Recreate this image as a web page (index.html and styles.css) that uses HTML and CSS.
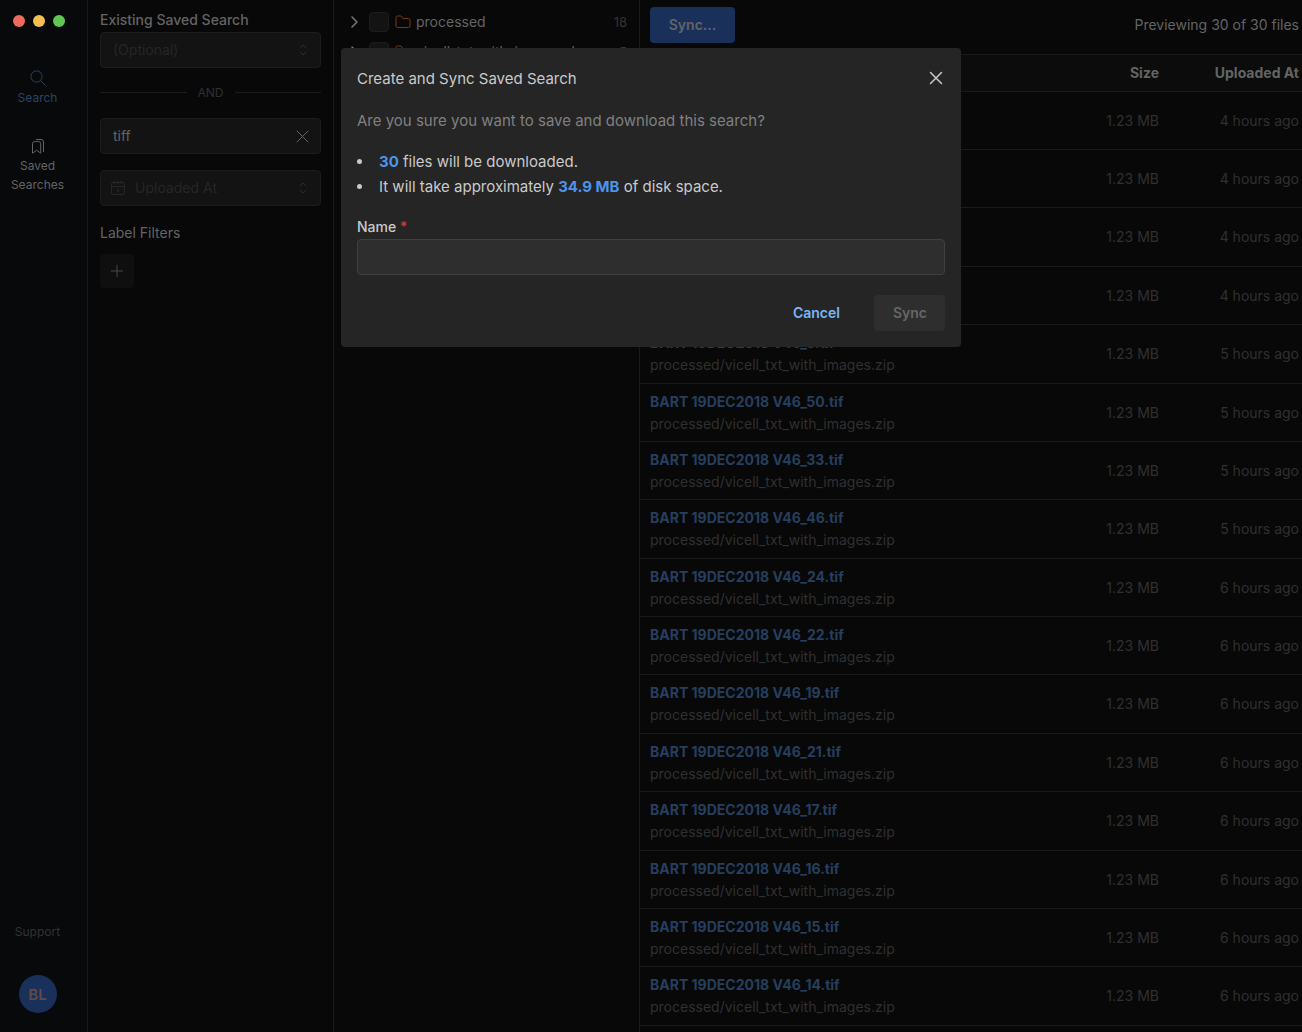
FILE: index.html
```html
<!DOCTYPE html>
<html lang="en">
<head>
<meta charset="utf-8">
<title>Search</title>
<link rel="stylesheet" href="styles.css">
</head>
<body>
<div class="app">
  <nav class="rail">
    <div class="lights" aria-hidden="true"><span class="light red"></span><span class="light yellow"></span><span class="light green"></span></div>
    <a class="rail-link active" href="#search">
      <svg width="18" height="18" viewBox="0 0 18 18" fill="none" stroke="currentColor"><circle cx="8.500" cy="7.500" r="5.600"/><path d="M12.500 11.500l4.800 4.800"/></svg>
      <span>Search</span>
    </a>
    <a class="rail-link" href="#saved">
      <svg width="18" height="18" viewBox="0 0 18 18" fill="none" stroke="currentColor"><path d="M3.500 16.200V6.600a2 2 0 0 1 2-2h4.200a2 2 0 0 1 2 2v9.600l-4.100-3z" stroke-linejoin="round"/><path d="M7.500 2.500h4.500a2.500 2.500 0 0 1 2.500 2.500v9.500" stroke-linecap="round"/></svg>
      <span>Saved Searches</span>
    </a>
    <a class="support" href="#support">Support</a>
    <button class="avatar" type="button">BL</button>
  </nav>

  <section class="filters">
    <label class="field-label medium" for="existing">Existing Saved Search</label>
    <div class="control">
      <select id="existing" class="grow"><option>(Optional)</option></select>
      <svg class="updown" width="14" height="14" viewBox="0 0 14 14" fill="none" stroke="currentColor" stroke-linecap="round" stroke-linejoin="round"><path d="M5 5l3-3 3 3M5 9l3 3 3-3"/></svg>
    </div>
    <div class="divider">AND</div>
    <div class="control text-control">
      <input class="grow" type="text" value="tiff" aria-label="File search">
      <button class="icon-button" type="button" aria-label="Clear"><svg width="14" height="14" viewBox="0 0 14 14" fill="none" stroke="currentColor" stroke-linecap="round"><path d="M2 2l11 11M13 2l-11 11"/></svg></button>
    </div>
    <div class="control date-control">
      <svg class="calendar" width="16" height="16" viewBox="0 0 16 16" fill="none" stroke="currentColor" stroke-linecap="round" stroke-linejoin="round"><rect x="1.500" y="2.500" width="13" height="12" rx="1.500"/><path d="M4.500 1v3M8 1v3M11.500 1v3M1.500 6.500h13M8 9v3M7.500 10.500h1"/></svg>
      <select class="grow" aria-label="Uploaded At"><option>Uploaded At</option></select>
      <svg class="updown" width="14" height="14" viewBox="0 0 14 14" fill="none" stroke="currentColor" stroke-linecap="round" stroke-linejoin="round"><path d="M5 5l3-3 3 3M5 9l3 3 3-3"/></svg>
    </div>
    <div class="field-label filters-title">Label Filters</div>
    <button class="add" type="button" aria-label="Add label filter"><svg width="14" height="14" viewBox="0 0 14 14" fill="none" stroke="currentColor"><path d="M7 1v12M1 7h12"/></svg></button>
  </section>

  <section class="tree">
    <div class="node">
      <svg class="chevron" width="12" height="14" viewBox="0 0 12 14" fill="none" stroke="currentColor" stroke-width="1.500" stroke-linecap="round" stroke-linejoin="round"><path d="M3 2l5 5-5 5"/></svg>
      <input id="n1" type="checkbox">
      <svg class="folder" width="16" height="14" viewBox="0 0 16 14" fill="none" stroke="currentColor" stroke-linejoin="round"><path d="M1 2.500a1.500 1.500 0 0 1 1.500-1.500h3.500l2 2.500h5.500a1.500 1.500 0 0 1 1.500 1.500v6a1.500 1.500 0 0 1-1.500 1.500h-11a1.500 1.500 0 0 1-1.500-1.500z"/></svg>
      <label class="grow" for="n1">processed</label><span class="count">18</span>
    </div>
    <div class="node">
      <svg class="chevron" width="12" height="14" viewBox="0 0 12 14" fill="none" stroke="currentColor" stroke-width="1.500" stroke-linecap="round" stroke-linejoin="round"><path d="M3 2l5 5-5 5"/></svg>
      <input id="n2" type="checkbox">
      <svg class="folder" width="16" height="14" viewBox="0 0 16 14" fill="none" stroke="currentColor" stroke-linejoin="round"><path d="M1 2.500a1.500 1.500 0 0 1 1.500-1.500h3.500l2 2.500h5.500a1.500 1.500 0 0 1 1.500 1.500v6a1.500 1.500 0 0 1-1.500 1.500h-11a1.500 1.500 0 0 1-1.500-1.500z"/></svg>
      <label class="grow" for="n2">vicell_txt_with_images.d</label><span class="count">5</span>
    </div>
  </section>

  <main class="results">
    <header class="toolbar"><button class="sync" type="button">Sync...</button><span>Previewing 30 of 30 files</span></header>
    <table>
      <thead><tr><th></th><th class="size">Size</th><th class="date">Uploaded At</th></tr></thead>
      <tbody>
        <tr><td></td><td>1.23 MB</td><td>4 hours ago</td></tr>
        <tr><td></td><td>1.23 MB</td><td>4 hours ago</td></tr>
        <tr><td></td><td>1.23 MB</td><td>4 hours ago</td></tr>
        <tr><td></td><td>1.23 MB</td><td>4 hours ago</td></tr>
        <tr><td><a href="#f">BART 19DEC2018 V46_3.tif</a><div>processed/vicell_txt_with_images.zip</div></td><td>1.23 MB</td><td>5 hours ago</td></tr>
        <tr><td><a href="#f">BART 19DEC2018 V46_50.tif</a><div>processed/vicell_txt_with_images.zip</div></td><td>1.23 MB</td><td>5 hours ago</td></tr>
        <tr><td><a href="#f">BART 19DEC2018 V46_33.tif</a><div>processed/vicell_txt_with_images.zip</div></td><td>1.23 MB</td><td>5 hours ago</td></tr>
        <tr><td><a href="#f">BART 19DEC2018 V46_46.tif</a><div>processed/vicell_txt_with_images.zip</div></td><td>1.23 MB</td><td>5 hours ago</td></tr>
        <tr><td><a href="#f">BART 19DEC2018 V46_24.tif</a><div>processed/vicell_txt_with_images.zip</div></td><td>1.23 MB</td><td>6 hours ago</td></tr>
        <tr><td><a href="#f">BART 19DEC2018 V46_22.tif</a><div>processed/vicell_txt_with_images.zip</div></td><td>1.23 MB</td><td>6 hours ago</td></tr>
        <tr><td><a href="#f">BART 19DEC2018 V46_19.tif</a><div>processed/vicell_txt_with_images.zip</div></td><td>1.23 MB</td><td>6 hours ago</td></tr>
        <tr><td><a href="#f">BART 19DEC2018 V46_21.tif</a><div>processed/vicell_txt_with_images.zip</div></td><td>1.23 MB</td><td>6 hours ago</td></tr>
        <tr><td><a href="#f">BART 19DEC2018 V46_17.tif</a><div>processed/vicell_txt_with_images.zip</div></td><td>1.23 MB</td><td>6 hours ago</td></tr>
        <tr><td><a href="#f">BART 19DEC2018 V46_16.tif</a><div>processed/vicell_txt_with_images.zip</div></td><td>1.23 MB</td><td>6 hours ago</td></tr>
        <tr><td><a href="#f">BART 19DEC2018 V46_15.tif</a><div>processed/vicell_txt_with_images.zip</div></td><td>1.23 MB</td><td>6 hours ago</td></tr>
        <tr><td><a href="#f">BART 19DEC2018 V46_14.tif</a><div>processed/vicell_txt_with_images.zip</div></td><td>1.23 MB</td><td>6 hours ago</td></tr>
      </tbody>
    </table>
  </main>
</div>

<div class="overlay">
  <form class="dialog" role="dialog" aria-modal="true" aria-labelledby="dialog-title">
    <header class="dialog-head">
      <h2 id="dialog-title">Create and Sync Saved Search</h2>
      <button class="icon-button" type="button" aria-label="Close"><svg width="14" height="14" viewBox="0 0 14 14" fill="none" stroke="currentColor" stroke-width="1.500" stroke-linecap="round"><path d="M1.500 1.500l11 11M12.500 1.500l-11 11"/></svg></button>
    </header>
    <p>Are you sure you want to save and download this search?</p>
    <ul>
      <li><strong>30</strong> files will be downloaded.</li>
      <li>It will take approximately <strong>34.9 MB</strong> of disk space.</li>
    </ul>
    <label for="search-name">Name <span class="required">*</span></label>
    <input id="search-name" class="name-input" type="text">
    <footer class="actions"><button class="cancel" type="button">Cancel</button><button class="submit" type="submit" disabled>Sync</button></footer>
  </form>
</div>
</body>
</html>
```

FILE: styles.css
```css
* { box-sizing: border-box; }

body {
  margin: 0;
  background: #080808;
  color: #636464;
  font: 14px/22px Inter, "Liberation Sans", sans-serif;
}

button, input, select {
  margin: 0;
  padding: 0;
  border: 0;
  outline: 0;
  background: none;
  color: inherit;
  font: inherit;
}

a { color: inherit; text-decoration: none; }
svg { display: block; flex: none; }
.grow { flex: 1; min-width: 0; }

.app {
  display: grid;
  grid-template-columns: 88px 246px 306px minmax(0, 1fr);
  height: 100vh;
  overflow: hidden;
}

/* Navigation rail */
.rail {
  display: flex;
  flex-direction: column;
  align-items: center;
  padding: 15px 12px 19px 0;
  border-right: 1px solid #1a1a1a;
  background: #07090b;
  font-size: 12px;
  line-height: 19px;
  text-align: center;
}
.lights { display: flex; gap: 8px; padding-left: 3px; margin-bottom: 42px; }
.light { width: 12px; height: 12px; border-radius: 50%; }
.red { background: #ed6a5e; }
.yellow { background: #f5bf4f; }
.green { background: #61c554; }
.rail-link {
  display: flex;
  flex-direction: column;
  align-items: center;
  gap: 1px;
  margin-bottom: 30px;
}
.active { color: #2b4663; }
.support { margin-top: auto; margin-bottom: 34px; color: #333434; }
.avatar {
  width: 38px;
  height: 38px;
  flex: none;
  border-radius: 50%;
  background: #18305a;
  color: #624a4a;
  font-size: 15px;
  font-weight: 600;
}

/* Filters */
.filters {
  display: flex;
  flex-direction: column;
  padding: 9px 12px;
  border-right: 1px solid #1a1a1a;
}
.medium { font-weight: 500; }
.control {
  display: flex;
  align-items: center;
  height: 36px;
  margin-top: 1px;
  padding: 0 11px 0 12px;
  border: 1px solid #1c1c1c;
  border-radius: 4px;
  background: #131313;
}
.control select { appearance: none; color: #262626; }
.updown { color: #2c2c2c; }
.divider {
  display: flex;
  align-items: center;
  gap: 11px;
  margin: 15px 0;
  color: #303030;
  font-size: 12px;
  line-height: 19px;
}
.divider::before, .divider::after {
  content: "";
  flex: 1;
  height: 1px;
  background: #1c1c1c;
}
.icon-button { display: grid; place-items: center; width: 14px; height: 22px; }
.date-control { gap: 9px; margin-top: 16px; padding-left: 9px; }
.calendar { color: #262626; }
.filters-title { margin: 16px 0 10px; }
.add {
  display: grid;
  place-items: center;
  width: 34px;
  height: 34px;
  border-radius: 4px;
  background: #0f0f0f;
  color: #484848;
}

/* Folder tree */
.tree { padding: 7px 12px 0 15px; border-right: 1px solid #1a1a1a; }
.node { display: flex; align-items: center; height: 30px; }
.node .chevron { margin-right: 8px; color: #777; }
.node input {
  appearance: none;
  width: 20px;
  height: 20px;
  flex: none;
  border: 1px solid #1c1c1c;
  border-radius: 4px;
  background: #131313;
}
.folder { margin: 0 5px 0 6px; color: #713d0e; }
.count { color: #333; font-size: 13px; }

/* Results */
.toolbar {
  display: flex;
  align-items: center;
  justify-content: space-between;
  height: 54px;
  padding: 0 3px 4px 10px;
}
.sync {
  width: 85px;
  height: 36px;
  border-radius: 4px;
  background: #18305a;
  font-weight: 600;
}
table { width: 100%; border-collapse: collapse; table-layout: fixed; }
th, td { padding: 6px 3px 6px 10px; text-align: right; }
th { height: 37px; border: solid #1a1a1a; border-width: 1px 0; background: #0c0c0c; font-weight: 700; }
td { height: 58px; border-bottom: 1px solid #1a1a1a; color: #303030; }
tr:nth-child(8n + 3) td, tr:nth-child(8n + 5) td, tr:nth-child(8n + 8) td { height: 59px; }
th:first-child, td:first-child { text-align: left; }
.size { width: 120px; }
.date { width: 140px; }
td a { display: block; color: #263f5e; font-weight: 700; }

/* Dialog */
.overlay {
  position: fixed;
  inset: 0;
  display: flex;
  align-items: flex-start;
  justify-content: center;
  padding: 48px 16px;
}
.dialog {
  width: 620px;
  padding: 16px;
  border-radius: 4px;
  background: #252525;
  color: #c9cacb;
  font-size: 15px;
  line-height: 25px;
}
.dialog-head { display: flex; align-items: center; justify-content: space-between; height: 28px; padding-right: 2px; }
h2 { margin: 0; font-size: 15px; font-weight: 400; }
p { margin: 16px 0; color: #808080; }
ul { margin: 0 0 17px; padding-left: 17px; }
li { padding-left: 5px; }
strong { color: #4c94eb; font-weight: 700; }
.dialog label { display: block; margin-bottom: 1px; font-size: 14px; font-weight: 500; line-height: 22px; }
.required { color: #c9403f; }
.name-input {
  display: block;
  width: 100%;
  height: 36px;
  padding: 0 12px;
  border: 1px solid #404040;
  border-radius: 4px;
  background: #2e2e2e;
  font-size: 14px;
}
.actions { display: flex; justify-content: flex-end; gap: 16px; margin-top: 20px; font-size: 14px; font-weight: 600; }
.actions button { height: 36px; padding: 0 18px 1px 19px; border-radius: 4px; }
.cancel { color: #79b7f8; }
.submit { background: #2e2e2e; color: #666; }
```
